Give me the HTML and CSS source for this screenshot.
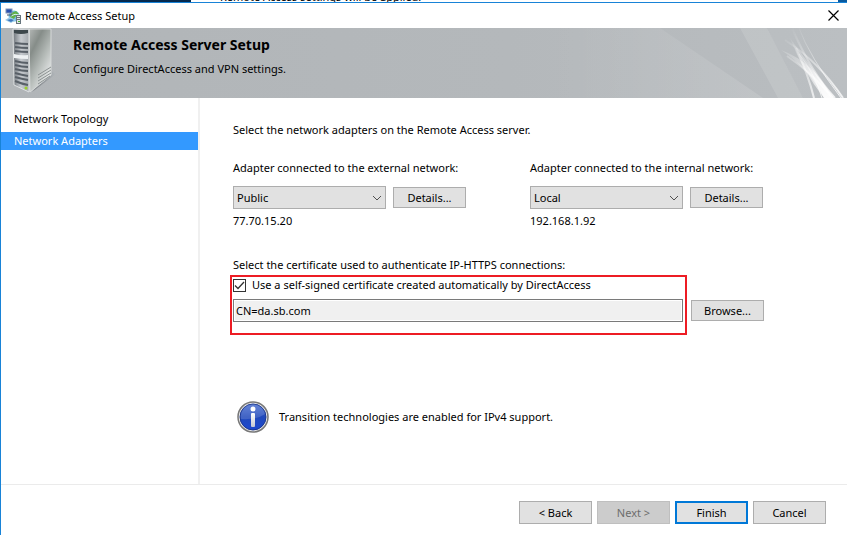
FILE: index.html
```html
<!DOCTYPE html>
<html lang="en">
<head>
    <meta charset="UTF-8">
    <title>Remote Access Setup</title>
    <link rel="stylesheet" href="styles.css">
</head>
<body>
    <div class="behind">
        <p class="behind-text">Remote Access settings will be applied.</p>
    </div>
    <div class="window">
        <div class="titlebar">
            <svg class="app-icon" width="16" height="16" viewBox="0 0 16 16">
                <circle cx="9" cy="8" r="5.5" fill="#6fc0e6"/>
                <path d="M6 5l5-2 3 3-4 3-2 4-3-3z" fill="#62b048"/>
                <path d="M6 8q4-3 8-1" stroke="#d9f1fa" fill="none"/>
                <rect x="1" y="1" width="6" height="4" fill="#2a50b0" stroke="#7f93b8"/>
                <path d="M2 7h5" stroke="#42506c"/>
                <path d="M0 12l5-3 6 3-5 3z" fill="#9ccbe8"/>
                <path d="M2 12l4-1 3 1-3 2z" fill="#3c76bf"/>
                <rect x="11.5" y="7.5" width="4" height="8" fill="#dfe5e8" stroke="#66747c"/>
                <path d="M12 9.500h3M12 11.500h3" stroke="#66747c"/>
                <rect x="13" y="13" width="2" height="1" fill="#4fae37"/>
            </svg>
            <span class="titlebar-text">Remote Access Setup</span>
            <button class="close" type="button" aria-label="Close">
                <svg width="11" height="11" viewBox="0 0 11 11">
                    <path d="M0.500 0.500l10 10M10.500 0.500l-10 10" stroke="#000" stroke-width="1.200"/>
                </svg>
            </button>
        </div>

        <header class="banner">
            <svg class="banner-art" width="300" height="70" viewBox="0 0 300 70">
                <defs>
                    <linearGradient id="streak" gradientUnits="userSpaceOnUse" x1="238" y1="4" x2="282" y2="70">
                        <stop offset="0" stop-color="#fff" stop-opacity="0"/>
                        <stop offset="0.500" stop-color="#fff" stop-opacity="0.400"/>
                        <stop offset="1" stop-color="#fff" stop-opacity="0.800"/>
                    </linearGradient>
                    <linearGradient id="haze" x1="0" y1="0" x2="1" y2="0">
                        <stop offset="0" stop-color="#fff" stop-opacity="0"/>
                        <stop offset="1" stop-color="#fff" stop-opacity="0.120"/>
                    </linearGradient>
                    <filter id="soft"><feGaussianBlur stdDeviation="0.600"/></filter>
                </defs>
                <path d="M0 0h113l103 70H0z" fill="url(#haze)"/>
                <path d="M193 0h27l36 70h-25z" fill="#fff" opacity="0.120"/>
                <path d="M220 0h80v70h-44z" fill="#fff" opacity="0.040"/>
                <g fill="url(#streak)" filter="url(#soft)">
                    <path d="M234 22q28 18 43 48h8q-18-36-51-48z"/>
                    <path d="M243 10q12 32 34 60h10q-22-30-44-60z"/>
                </g>
                <g fill="none" stroke="url(#streak)" filter="url(#soft)">
                    <path d="M238 12q34 22 58 58" stroke-width="2"/>
                    <path d="M245 0q20 46 43 70" stroke-width="2"/>
                    <path d="M252 0q10 28 42 70"/>
                    <path d="M249 20q12 26 18 50" stroke-width="2"/>
                    <path d="M252 26q16 20 23 44"/>
                    <path d="M240 28q24 16 46 42" stroke-width="2"/>
                </g>
            </svg>
            <svg class="server" width="48" height="68" viewBox="0 0 48 68">
                <defs>
                    <linearGradient id="side" x1="0" y1="0" x2="0.700" y2="1">
                        <stop offset="0" stop-color="#b4b8b6"/>
                        <stop offset="0.300" stop-color="#868d89"/>
                        <stop offset="0.600" stop-color="#b3b9b6"/>
                        <stop offset="1" stop-color="#f0f2f2"/>
                    </linearGradient>
                    <linearGradient id="front" x1="0" y1="0" x2="1" y2="0">
                        <stop offset="0" stop-color="#70767c"/>
                        <stop offset="0.500" stop-color="#c6cacf"/>
                        <stop offset="1" stop-color="#a3a8ad"/>
                    </linearGradient>
                    <linearGradient id="shade" x1="0" y1="0" x2="1" y2="0">
                        <stop offset="0" stop-color="#777c80"/>
                        <stop offset="1" stop-color="#b2b7bb"/>
                    </linearGradient>
                </defs>
                <path d="M39 43l5 3-20 15-4 3z" fill="url(#shade)"/>
                <path d="M17 1h22v46L18 64z" fill="url(#side)" stroke="#d5d8d8"/>
                <path d="M1 1h16v63L2 57z" fill="url(#front)" stroke="#dfe2e3"/>
                <path d="M2 2h14v3q-7 2-14 0z" fill="#3d474c"/>
                <path d="M2 26q7 2 14 1v4q-7 0-14-1z" fill="#eef1f3"/>
                <path d="M3 15q7 1 13 1M3 19q7 1 13 1M3 23q7 1 13 1M3 33q7 2 13 2M3 37q7 2 13 2M3 41q7 2 13 2M3 45q7 2 13 3M3 49q7 2 13 3M3 53q7 3 13 4" fill="none" stroke="#596068" stroke-width="2"/>
                <circle cx="14" cy="60" r="1.500" fill="#9bd02c"/>
                <path d="M26 50l13-8M26 53l13-8M26 56l12-8M26 47l13-8" stroke="#8c9292"/>
            </svg>
            <div class="banner-text">
                <h1>Remote Access Server Setup</h1>
                <p>Configure DirectAccess and VPN settings.</p>
            </div>
        </header>

        <div class="content">
            <nav class="steps">
                <a href="#topology">Network Topology</a>
                <a href="#adapters" class="current">Network Adapters</a>
            </nav>
            <main class="page">
                <p class="intro">Select the network adapters on the Remote Access server.</p>
                <div class="adapters">
                    <div class="adapter">
                        <label for="external">Adapter connected to the external network:</label>
                        <div class="adapter-row">
                            <div class="dropdown">
                                <select id="external"><option>Public</option></select>
                                <svg class="arrow" width="10" height="6" viewBox="0 0 10 6"><path d="M1 1l4 4 4-4" fill="none" stroke="#505050"/></svg>
                            </div>
                            <button type="button">Details...</button>
                        </div>
                        <p>77.70.15.20</p>
                    </div>
                    <div class="adapter">
                        <label for="internal">Adapter connected to the internal network:</label>
                        <div class="adapter-row">
                            <div class="dropdown">
                                <select id="internal"><option>Local</option></select>
                                <svg class="arrow" width="10" height="6" viewBox="0 0 10 6"><path d="M1 1l4 4 4-4" fill="none" stroke="#505050"/></svg>
                            </div>
                            <button type="button">Details...</button>
                        </div>
                        <p>192.168.1.92</p>
                    </div>
                </div>

                <label class="cert-label" for="cert">Select the certificate used to authenticate IP-HTTPS connections:</label>
                <div class="cert">
                    <div class="highlight">
                        <label class="check"><input type="checkbox" checked>Use a self-signed certificate created automatically by DirectAccess</label>
                        <input class="cert-name" id="cert" type="text" value="CN=da.sb.com" readonly>
                    </div>
                    <button type="button">Browse...</button>
                </div>

                <div class="info">
                    <svg width="32" height="32" viewBox="0 0 32 32">
                        <defs>
                            <linearGradient id="blue" x1="0" y1="0" x2="0" y2="1">
                                <stop offset="0" stop-color="#4a6fd0"/>
                                <stop offset="0.500" stop-color="#2149bb"/>
                                <stop offset="1" stop-color="#1c48d0"/>
                            </linearGradient>
                            <linearGradient id="stem" x1="0" y1="0" x2="0" y2="1">
                                <stop offset="0" stop-color="#fff"/>
                                <stop offset="1" stop-color="#c4c8d2"/>
                            </linearGradient>
                        </defs>
                        <circle cx="16" cy="16" r="15" fill="#e9e9e9" stroke="#777" stroke-width="1.500"/>
                        <circle cx="16" cy="16" r="13" fill="url(#blue)" stroke="#1a3690"/>
                        <path d="M4 18a12 12 0 0 1 24-5q-8 6-24 5z" fill="#fff" opacity="0.150"/>
                        <circle cx="16" cy="8" r="2.500" fill="#fff"/>
                        <rect x="14" y="12" width="4" height="14" rx="1" fill="url(#stem)"/>
                    </svg>
                    <p>Transition technologies are enabled for IPv4 support.</p>
                </div>
            </main>
        </div>

        <footer class="buttons">
            <button type="button">&lt; Back</button>
            <button type="button" disabled>Next &gt;</button>
            <button type="button" class="default">Finish</button>
            <button type="button">Cancel</button>
        </footer>
    </div>
</body>
</html>
```
FILE: styles.css
```css
* {
    box-sizing: border-box;
}

body {
    display: flex;
    flex-direction: column;
    min-height: 100vh;
    margin: 0;
    background: #fff;
    color: #000;
    font: 11px/18px "Noto Sans", "Open Sans", sans-serif;
}

h1, p {
    margin: 0;
}

button, select, input {
    margin: 0;
    color: #000;
    font: inherit;
}

/* window showing behind the wizard */
.behind {
    display: flex;
    align-items: flex-end;
    height: 2px;
    padding-left: 220px;
    overflow: hidden;
    background: linear-gradient(to right, #06294e 191px, #fff 191px, #fff calc(100% - 9px), #0a5a9e calc(100% - 9px));
}

.behind-text {
    line-height: 10px;
}

.window {
    display: flex;
    flex: 1;
    flex-direction: column;
    border-top: 1px solid #1883d7;
    border-left: 1px solid #1883d7;
}

.titlebar {
    display: flex;
    align-items: center;
    height: 25px;
    padding: 0 8px 0 4px;
}

.titlebar-text {
    flex: 1;
    margin-left: 4px;
}

.banner {
    display: flex;
    position: relative;
    height: 70px;
    padding-left: 11px;
    background: linear-gradient(to right, #b1b5b8, #b4b8bb 60%, #b9bdc0);
}

.banner-art {
    position: absolute;
    top: 0;
    right: 0;
}

.banner-text {
    padding: 8px 0 0 13px;
}

.banner h1 {
    font-size: 14px;
    line-height: 18px;
}

.banner p {
    margin-top: 6px;
}

.content {
    display: flex;
    flex: 1;
}

.steps {
    display: flex;
    flex: 0 0 199px;
    flex-direction: column;
    gap: 4px;
    padding-top: 12px;
    border-right: 2px solid #f0f0f0;
}

.steps a {
    padding-left: 13px;
    color: #000;
    text-decoration: none;
}

.steps .current {
    background: #39f;
    color: #fff;
}

.page {
    flex: 1;
    min-width: 0;
    padding: 23px 20px 0 33px;
}

.adapters {
    display: grid;
    grid-template-columns: 1fr 1fr;
    margin-top: 20px;
}

.adapter {
    padding-right: 64px;
    white-space: nowrap;
}

.adapter label,
.cert-label {
    display: block;
}

.adapter-row {
    display: flex;
    align-items: center;
    gap: 7px;
    margin: 9px 0 3px;
}

button {
    width: 73px;
    height: 21px;
    padding: 0;
    border: 1px solid #adadad;
    background: #e1e1e1;
    line-height: 18px;
}

.close {
    display: flex;
    width: 11px;
    height: 11px;
    border: 0;
    background: none;
}

.dropdown {
    display: grid;
    flex: 1;
    align-items: center;
}

.dropdown select,
.dropdown .arrow {
    grid-area: 1 / 1;
}

.dropdown select {
    width: 100%;
    height: 23px;
    padding: 0 3px;
    border: 1px solid #adadad;
    border-radius: 0;
    background: #e1e1e1;
    appearance: none;
}

.dropdown .arrow {
    justify-self: end;
    margin-right: 4px;
    pointer-events: none;
}

.cert-label {
    margin-top: 26px;
}

.cert {
    display: flex;
    align-items: center;
    gap: 4px;
    margin: 1px 63px 0 -3px;
}

.highlight {
    flex: 1;
    height: 60px;
    padding: 0 2px 0 1px;
    border: 2px solid #ed1c24;
}

.cert button {
    margin-bottom: -11px;
}

.check {
    display: flex;
    align-items: center;
    gap: 6px;
    line-height: 16px;
}

.check input {
    width: 13px;
    height: 13px;
    border: 1px solid #333;
    appearance: none;
    background: #fff;
}

.check input:checked {
    background: #fff url("data:image/svg+xml,%3Csvg xmlns='http://www.w3.org/2000/svg' viewBox='0 0 11 11'%3E%3Cpath d='M1 5.500l3 3 6-6.500' fill='none' stroke='%23333' stroke-width='1.300'/%3E%3C/svg%3E");
}

.cert-name {
    display: block;
    width: 100%;
    height: 23px;
    margin-top: 6px;
    padding: 0 2px;
    border: 1px solid #7a7a7a;
    outline: 0;
    background: #f0f0f0;
    box-shadow: inset 0 0 0 1px #fff;
}

.info {
    display: flex;
    align-items: center;
    gap: 10px;
    margin: 66px 0 0 4px;
}

.buttons {
    display: flex;
    justify-content: flex-end;
    gap: 5px;
    padding: 16px 21px 11px;
    border-top: 1px solid #ebebeb;
}

.buttons button {
    height: 23px;
}

.buttons button:disabled {
    border-color: #bfbfbf;
    background: #ccc;
    color: #6d6d6d;
}

.buttons .default {
    border: 2px solid #0078d7;
}
```
